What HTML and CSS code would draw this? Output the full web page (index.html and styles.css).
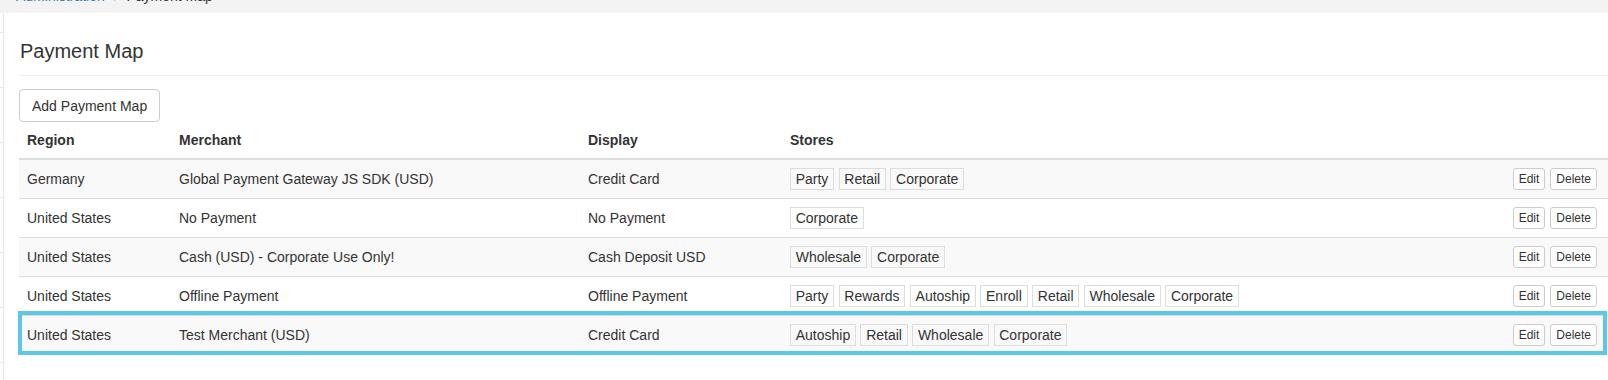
FILE: index.html
```html
<!DOCTYPE html>
<html>
<head>
<meta charset="utf-8">
<title>Payment Map</title>
<link rel="stylesheet" href="styles.css">
</head>
<body>
<div class="topbar">
  <ol class="breadcrumb">
    <li><a href="#">Administration</a></li>
    <li class="active">Payment Map</li>
  </ol>
</div>
<div class="main">
  <aside class="sidebar">
    <div class="side-item first"></div>
    <div class="side-item"></div>
    <div class="side-item"></div>
    <div class="side-item"></div>
    <div class="side-item"></div>
    <div class="side-item"></div>
    <div class="side-item"></div>
  </aside>
  <section class="panel">
    <h1 class="page-header">Payment Map</h1>
    <button class="btn">Add Payment Map</button>
    <div class="table-wrap">
      <table class="table">
        <colgroup>
          <col class="c-region"><col class="c-merchant"><col class="c-display"><col class="c-stores"><col class="c-actions">
        </colgroup>
        <thead>
          <tr><th>Region</th><th>Merchant</th><th>Display</th><th>Stores</th><th></th></tr>
        </thead>
        <tbody>
          <tr>
            <td>Germany</td><td>Global Payment Gateway JS SDK (USD)</td><td>Credit Card</td>
            <td><div class="tags"><span class="tag">Party</span><span class="tag">Retail</span><span class="tag">Corporate</span></div></td>
            <td><div class="actions"><button class="btn-xs">Edit</button><button class="btn-xs">Delete</button></div></td>
          </tr>
          <tr>
            <td>United States</td><td>No Payment</td><td>No Payment</td>
            <td><div class="tags"><span class="tag">Corporate</span></div></td>
            <td><div class="actions"><button class="btn-xs">Edit</button><button class="btn-xs">Delete</button></div></td>
          </tr>
          <tr>
            <td>United States</td><td>Cash (USD) - Corporate Use Only!</td><td>Cash Deposit USD</td>
            <td><div class="tags"><span class="tag">Wholesale</span><span class="tag">Corporate</span></div></td>
            <td><div class="actions"><button class="btn-xs">Edit</button><button class="btn-xs">Delete</button></div></td>
          </tr>
          <tr>
            <td>United States</td><td>Offline Payment</td><td>Offline Payment</td>
            <td><div class="tags"><span class="tag">Party</span><span class="tag">Rewards</span><span class="tag">Autoship</span><span class="tag">Enroll</span><span class="tag">Retail</span><span class="tag">Wholesale</span><span class="tag">Corporate</span></div></td>
            <td><div class="actions"><button class="btn-xs">Edit</button><button class="btn-xs">Delete</button></div></td>
          </tr>
          <tr>
            <td>United States</td><td>Test Merchant (USD)</td><td>Credit Card</td>
            <td><div class="tags"><span class="tag">Autoship</span><span class="tag">Retail</span><span class="tag">Wholesale</span><span class="tag">Corporate</span></div></td>
            <td><div class="actions"><button class="btn-xs">Edit</button><button class="btn-xs">Delete</button></div></td>
          </tr>
        </tbody>
      </table>
      <div class="highlight"></div>
    </div>
  </section>
</div>
</body>
</html>
```
FILE: styles.css
```css
html, body {
  margin: 0;
  padding: 0;
}
body {
  background: #f3f3f3;
  font-family: "Liberation Sans", Arial, sans-serif;
  font-size: 14px;
  line-height: 20px;
  color: #333;
  width: 1608px;
  height: 380px;
  overflow: hidden;
}
.topbar {
  height: 13px;
  overflow: hidden;
  background: #f3f3f3;
}
.breadcrumb {
  list-style: none;
  margin: -14px 0 0 16px;
  padding: 0;
  display: flex;
  white-space: nowrap;
}
.breadcrumb li + li::before {
  content: "/\00a0";
  padding: 0 5px 0 9px;
  color: #ccc;
}
.breadcrumb a {
  color: #337ab7;
  text-decoration: none;
}
.breadcrumb .active {
  color: #333;
}
.main {
  display: flex;
  height: 367px;
}
.sidebar {
  width: 3px;
  flex: none;
  background: #fff;
  border-right: 1px solid #e7e7e7;
}
.side-item {
  height: 54px;
  border-bottom: 1px solid #e7e7e7;
}
.side-item.first {
  height: 19px;
}
.panel {
  flex: 1;
  background: #fff;
  padding: 27px 0 0 15px;
}
.page-header {
  margin: 0 0 13px 0;
  padding: 0 0 13px 1px;
  font-size: 20px;
  line-height: 22px;
  font-weight: normal;
  color: #333;
  border-bottom: 1px solid #eee;
}
.btn {
  display: block;
  font-family: inherit;
  font-size: 14px;
  line-height: 20px;
  color: #333;
  background: #fff;
  border: 1px solid #ccc;
  border-radius: 4px;
  padding: 6px 12px 5px;
  margin: 0;
  height: 33px;
}
.table-wrap {
  position: relative;
}
.table {
  width: 100%;
  border-collapse: collapse;
  table-layout: fixed;
}
.c-region { width: 152px; }
.c-merchant { width: 409px; }
.c-display { width: 202px; }
.c-actions { width: 150px; }
.table th {
  text-align: left;
  font-weight: bold;
  padding: 8px;
  border-bottom: 2px solid #ddd;
  vertical-align: bottom;
}
.table td {
  padding: 8px;
  border-top: 1px solid #ddd;
  vertical-align: middle;
  height: 22px;
  white-space: nowrap;
}
.table td:last-child {
  padding-right: 11px;
}
.table tbody tr:nth-child(odd) {
  background: #f9f9f9;
}
.tags {
  display: flex;
  gap: 4.6px;
}
.tag {
  display: block;
  height: 20px;
  line-height: 20px;
  padding: 0 4.7px;
  border: 1px solid #ddd;
}
.actions {
  display: flex;
  justify-content: flex-end;
  gap: 5px;
}
.btn-xs {
  font-family: inherit;
  font-size: 12px;
  line-height: 18px;
  height: 22px;
  padding: 1px 5px;
  color: #333;
  background: #fff;
  border: 1px solid #ccc;
  border-radius: 3px;
  margin: 0;
}
.highlight {
  position: absolute;
  left: -1px;
  top: 189px;
  width: 1581px;
  height: 36px;
  border: 4px solid #5bc8e8;
  pointer-events: none;
}
```
